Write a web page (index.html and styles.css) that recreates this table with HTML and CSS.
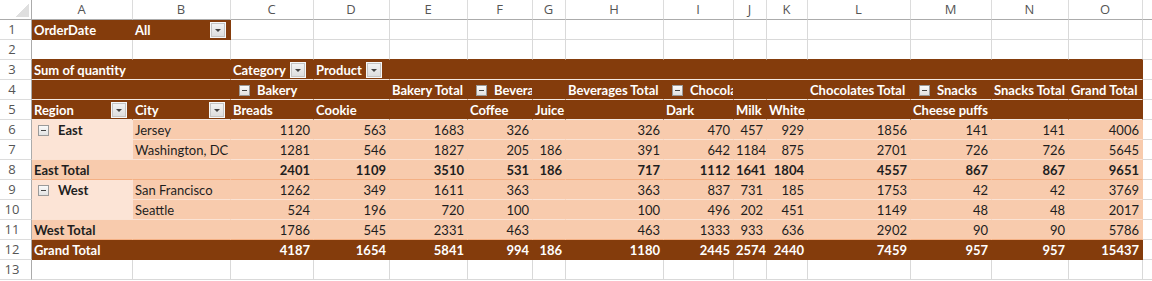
FILE: index.html
```html
<!DOCTYPE html>
<html>
<head>
<meta charset="utf-8">
<link rel="stylesheet" href="styles.css">
</head>
<body>
<div class="sheet">
  <div class="row">
    <div class="c corner"><span class="tri"></span></div>
    <div class="c hd">A</div><div class="c hd">B</div><div class="c hd">C</div><div class="c hd">D</div><div class="c hd">E</div><div class="c hd">F</div><div class="c hd">G</div><div class="c hd">H</div><div class="c hd">I</div><div class="c hd">J</div><div class="c hd">K</div><div class="c hd">L</div><div class="c hd">M</div><div class="c hd">N</div><div class="c hd">O</div><div class="c hd last"></div>
  </div>

  <div class="row">
    <div class="c rh">1</div>
    <div class="c dk">OrderDate</div>
    <div class="c dk fx"><span>All</span><span class="dd dd-r4"></span></div>
    <div class="c"></div><div class="c"></div><div class="c"></div><div class="c"></div><div class="c"></div><div class="c"></div><div class="c"></div><div class="c"></div><div class="c"></div><div class="c"></div><div class="c"></div><div class="c"></div><div class="c"></div><div class="c last"></div>
  </div>

  <div class="row">
    <div class="c rh">2</div>
    <div class="c top-dk"></div><div class="c top-dk"></div><div class="c top-dk"></div><div class="c top-dk"></div><div class="c top-dk"></div><div class="c top-dk"></div><div class="c top-dk"></div><div class="c top-dk"></div><div class="c top-dk"></div><div class="c top-dk"></div><div class="c top-dk"></div><div class="c top-dk"></div><div class="c top-dk"></div><div class="c top-dk"></div><div class="c top-dk"></div><div class="c last"></div>
  </div>

  <div class="row">
    <div class="c rh">3</div>
    <div class="c dk wl span2">Sum of quantity</div>
    <div class="c dk wl fx"><span>Category</span><span class="dd dd-r7"></span></div>
    <div class="c dk wl fx"><span>Product</span><span class="dd dd-r7"></span></div>
    <div class="c dk wl span11"></div>
    <div class="c last"></div>
  </div>

  <div class="row">
    <div class="c rh">4</div>
    <div class="c dk wl span2"></div>
    <div class="c dk wl fx"><span class="tg tg-c"></span><span>Bakery</span></div>
    <div class="c dk wl"></div>
    <div class="c dk wl">Bakery Total</div>
    <div class="c dk wl fx"><span class="tg tg-c"></span><span>Beverages</span></div>
    <div class="c dk wl"></div>
    <div class="c dk wl">Beverages Total</div>
    <div class="c dk wl fx"><span class="tg tg-c"></span><span>Chocolates</span></div>
    <div class="c dk wl"></div>
    <div class="c dk wl"></div>
    <div class="c dk wl">Chocolates Total</div>
    <div class="c dk wl fx"><span class="tg tg-c"></span><span>Snacks</span></div>
    <div class="c dk wl">Snacks Total</div>
    <div class="c dk wl">Grand Total</div>
    <div class="c last"></div>
  </div>

  <div class="row">
    <div class="c rh">5</div>
    <div class="c dk wl fx"><span>Region</span><span class="dd dd-r5"></span></div>
    <div class="c dk wl fx"><span>City</span><span class="dd dd-r5"></span></div>
    <div class="c dk wl">Breads</div>
    <div class="c dk wl">Cookie</div>
    <div class="c dk wl"></div>
    <div class="c dk wl">Coffee</div>
    <div class="c dk wl">Juice</div>
    <div class="c dk wl"></div>
    <div class="c dk wl">Dark</div>
    <div class="c dk wl">Milk</div>
    <div class="c dk wl">White</div>
    <div class="c dk wl"></div>
    <div class="c dk wl">Cheese puffs</div>
    <div class="c dk wl"></div>
    <div class="c dk wl"></div>
    <div class="c last"></div>
  </div>

  <div class="row">
    <div class="c rh">6</div>
    <div class="c rg fx"><span class="tg tg-r"></span><span class="bold">East</span></div>
    <div class="c lt">Jersey</div>
    <div class="c lt n">1120</div><div class="c lt n">563</div><div class="c lt n">1683</div><div class="c lt n">326</div><div class="c lt n"></div><div class="c lt n">326</div><div class="c lt n">470</div><div class="c lt n">457</div><div class="c lt n">929</div><div class="c lt n">1856</div><div class="c lt n">141</div><div class="c lt n">141</div><div class="c lt n">4006</div>
    <div class="c last"></div>
  </div>

  <div class="row">
    <div class="c rh">7</div>
    <div class="c rg rg-end"></div>
    <div class="c lt">Washington, DC</div>
    <div class="c lt n">1281</div><div class="c lt n">546</div><div class="c lt n">1827</div><div class="c lt n">205</div><div class="c lt n">186</div><div class="c lt n">391</div><div class="c lt n">642</div><div class="c lt n">1184</div><div class="c lt n">875</div><div class="c lt n">2701</div><div class="c lt n">726</div><div class="c lt n">726</div><div class="c lt n">5645</div>
    <div class="c last"></div>
  </div>

  <div class="row">
    <div class="c rh">8</div>
    <div class="c lt sub bold">East Total</div>
    <div class="c lt sub"></div>
    <div class="c lt sub n bold">2401</div><div class="c lt sub n bold">1109</div><div class="c lt sub n bold">3510</div><div class="c lt sub n bold">531</div><div class="c lt sub n bold">186</div><div class="c lt sub n bold">717</div><div class="c lt sub n bold">1112</div><div class="c lt sub n bold">1641</div><div class="c lt sub n bold">1804</div><div class="c lt sub n bold">4557</div><div class="c lt sub n bold">867</div><div class="c lt sub n bold">867</div><div class="c lt sub n bold">9651</div>
    <div class="c last"></div>
  </div>

  <div class="row">
    <div class="c rh">9</div>
    <div class="c rg fx"><span class="tg tg-r"></span><span class="bold">West</span></div>
    <div class="c lt">San Francisco</div>
    <div class="c lt n">1262</div><div class="c lt n">349</div><div class="c lt n">1611</div><div class="c lt n">363</div><div class="c lt n"></div><div class="c lt n">363</div><div class="c lt n">837</div><div class="c lt n">731</div><div class="c lt n">185</div><div class="c lt n">1753</div><div class="c lt n">42</div><div class="c lt n">42</div><div class="c lt n">3769</div>
    <div class="c last"></div>
  </div>

  <div class="row">
    <div class="c rh">10</div>
    <div class="c rg rg-end"></div>
    <div class="c lt">Seattle</div>
    <div class="c lt n">524</div><div class="c lt n">196</div><div class="c lt n">720</div><div class="c lt n">100</div><div class="c lt n"></div><div class="c lt n">100</div><div class="c lt n">496</div><div class="c lt n">202</div><div class="c lt n">451</div><div class="c lt n">1149</div><div class="c lt n">48</div><div class="c lt n">48</div><div class="c lt n">2017</div>
    <div class="c last"></div>
  </div>

  <div class="row">
    <div class="c rh">11</div>
    <div class="c lt sub bold">West Total</div>
    <div class="c lt sub"></div>
    <div class="c lt sub n">1786</div><div class="c lt sub n">545</div><div class="c lt sub n">2331</div><div class="c lt sub n">463</div><div class="c lt sub n"></div><div class="c lt sub n">463</div><div class="c lt sub n">1333</div><div class="c lt sub n">933</div><div class="c lt sub n">636</div><div class="c lt sub n">2902</div><div class="c lt sub n">90</div><div class="c lt sub n">90</div><div class="c lt sub n">5786</div>
    <div class="c last"></div>
  </div>

  <div class="row">
    <div class="c rh">12</div>
    <div class="c dk">Grand Total</div>
    <div class="c dk"></div>
    <div class="c dk n">4187</div><div class="c dk n">1654</div><div class="c dk n">5841</div><div class="c dk n">994</div><div class="c dk n">186</div><div class="c dk n">1180</div><div class="c dk n">2445</div><div class="c dk n">2574</div><div class="c dk n">2440</div><div class="c dk n">7459</div><div class="c dk n">957</div><div class="c dk n">957</div><div class="c dk n">15437</div>
    <div class="c last"></div>
  </div>

  <div class="row">
    <div class="c rh">13</div>
    <div class="c"></div><div class="c"></div><div class="c"></div><div class="c"></div><div class="c"></div><div class="c"></div><div class="c"></div><div class="c"></div><div class="c"></div><div class="c"></div><div class="c"></div><div class="c"></div><div class="c"></div><div class="c"></div><div class="c"></div><div class="c last"></div>
  </div>
</div>
</body>
</html>
```

FILE: styles.css
```css
* { box-sizing: border-box; }
html, body { margin: 0; padding: 0; background: #fff; }

.sheet {
  width: 1152px;
  height: 281px;
  overflow: hidden;
  font-family: Lato, "Liberation Sans", sans-serif;
  font-size: 13px;
  color: #1e1e1e;
}

.row {
  display: grid;
  grid-template-columns: 32px 101px 98px 83px 76px 78px 65px 33px 98px 70px 33px 41px 103px 81px 77px 74px 1fr;
  height: 20px;
}

.c {
  height: 20px;
  line-height: 20px;
  padding: 0 3px 0 2px;
  border-right: 1px solid #d9d9d9;
  border-bottom: 1px solid #d9d9d9;
  white-space: nowrap;
  overflow: hidden;
}
.c.last { border-right: none; }

.span2 { grid-column: span 2; }
.span11 { grid-column: span 11; }

/* sheet headers */
.hd {
  text-align: center;
  font-family: "Open Sans", "Noto Sans", sans-serif;
  font-size: 13px;
  color: #555;
  line-height: 19px;
  border-right-color: #dcdcdc;
  border-bottom-color: #ababab;
}
.corner {
  display: flex;
  justify-content: flex-end;
  align-items: flex-end;
  padding: 0 2px 2px 0;
  border-right-color: #ababab;
  border-bottom-color: #ababab;
}
.tri {
  width: 14px;
  height: 13px;
  background: linear-gradient(to bottom right, transparent 50%, #dfdfdf 50%);
}
.rh {
  text-align: center;
  padding: 0 7px 0 0;
  line-height: 19px;
  font-family: "Open Sans", "Noto Sans", sans-serif;
  font-size: 13px;
  color: #555;
  border-right-color: #ababab;
  border-bottom-color: #dcdcdc;
}

/* pivot styles */
.dk {
  background: #843c0c;
  color: #fff;
  font-weight: bold;
  border-right-color: #843c0c;
  border-bottom-color: #843c0c;
}
.dk.wl { border-bottom-color: #f4e9e2; }
.top-dk { border-bottom-color: #843c0c; }

.lt {
  background: #f8cbad;
  border-right-color: #f8cbad;
  border-bottom-color: #fbe3d4;
}
.lt.sub { border-bottom-color: #f4b084; }
.rg {
  background: #fce4d6;
  border-right-color: #fce4d6;
  border-bottom-color: #fce4d6;
}
.rg.rg-end { border-bottom-color: #fbe3d4; }

.n { text-align: right; }
.bold { font-weight: bold; }

.fx {
  display: flex;
  align-items: center;
}

/* dropdown filter button */
.dd {
  position: relative;
  flex: none;
  margin-left: auto;
  width: 14px;
  height: 14px;
  margin-top: 1px;
  background: linear-gradient(#f2f2f2, #dedede);
  border: 1px solid #c4c4c4;
  box-shadow: 0 0 0 1px #f7f7f7;
}
.dd::after {
  content: "";
  position: absolute;
  left: 3px;
  top: 5px;
  border-top: 3px solid #444;
  border-left: 3px solid transparent;
  border-right: 3px solid transparent;
}
.dd-r4 { margin-right: 2px; }
.dd-r5 { margin-right: 3px; }
.dd-r7 { margin-right: 5px; }

/* collapse toggle */
.tg {
  position: relative;
  flex: none;
  width: 11px;
  height: 11px;
  margin-top: 1px;
  background: linear-gradient(#fafafa, #e2e2e2);
  border: 1px solid #9a9a9a;
}
.tg::after {
  content: "";
  position: absolute;
  left: 2px;
  top: 4px;
  width: 5px;
  height: 1px;
  background: #444;
}
.tg-c { margin-left: 6px; margin-right: 7px; }
.tg-r { margin-left: 4px; margin-right: 9px; }
```
